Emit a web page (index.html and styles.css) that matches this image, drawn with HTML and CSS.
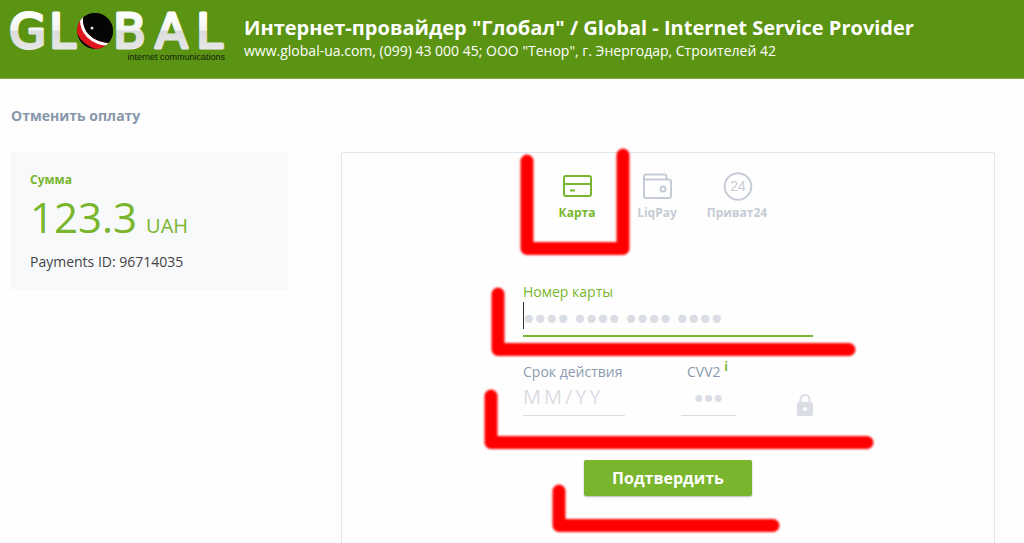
FILE: index.html
```html
<!DOCTYPE html>
<html lang="ru">
<head>
<meta charset="utf-8">
<meta name="viewport" content="width=device-width, initial-scale=1">
<title>Глобал - оплата</title>
<link rel="stylesheet" href="styles.css">
</head>
<body>
<header class="header">
  <svg class="logo" viewBox="0 0 218 60" role="img" aria-label="Global internet communications">
    <defs>
      <linearGradient id="silver" gradientUnits="userSpaceOnUse" x1="0" y1="4" x2="0" y2="41">
        <stop offset="0" stop-color="#fff"/>
        <stop offset="0.48" stop-color="#f4f4f4"/>
        <stop offset="0.52" stop-color="#dcdcdc"/>
        <stop offset="1" stop-color="#e6e6e6"/>
      </linearGradient>
      <clipPath id="ball"><circle cx="85" cy="23" r="18"/></clipPath>
    </defs>
    <g class="logo-word">
      <text x="-1" y="40">G</text>
      <text x="39" y="40">L</text>
      <text x="103" y="40">B</text>
      <text x="145" y="40">A</text>
      <text x="186" y="40">L</text>
    </g>
    <g clip-path="url(#ball)">
      <circle cx="85" cy="23" r="18" fill="#080808"/>
      <path d="M71 4C63 25 80 41 106 38" fill="none" stroke="#e0161c" stroke-width="9"/>
      <path d="M73 4C67 23 82 38 104 36" fill="none" stroke="#fff" stroke-width="3"/>
      <path d="M74 4C69 22 83 36 104 35V0H74Z" fill="#050505"/>
    </g>
    <circle cx="82" cy="20" r="1.500" fill="#ddd"/>
    <text class="logo-tag" x="215" y="52" text-anchor="end">internet communications</text>
  </svg>
  <div class="company">
    <h1 class="company-name">Интернет-провайдер "Глобал" / Global - Internet Service Provider</h1>
    <p class="company-info">www.global-ua.com, (099) 43 000 45; ООО "Тенор", г. Энергодар, Строителей 42</p>
  </div>
</header>

<main class="main">
  <a class="cancel" href="#">Отменить оплату</a>
  <div class="columns">
    <aside class="summary">
      <h2 class="summary-title">Сумма</h2>
      <p class="amount">123.3 <span class="currency">UAH</span></p>
      <p class="payment-id">Payments ID: 96714035</p>
    </aside>

    <section class="card">
      <form class="form">
        <div class="methods">
          <button class="method method-active" type="button">
            <svg class="method-icon" viewBox="0 0 32 30">
              <rect x="3" y="5" width="27" height="20" rx="2"/>
              <path d="M3 13H30M9 19.500H14"/>
            </svg>
            Карта
          </button>
          <button class="method" type="button">
            <svg class="method-icon" viewBox="0 0 32 30">
              <path d="M3 5.500V25a2 2 0 0 0 2 2H28a2 2 0 0 0 2-2V10.500a2 2 0 0 0-2-2H5a2 2 0 0 1-2-3a2 2 0 0 1 2-2H23.500a2 2 0 0 1 2 2V8"/>
              <circle cx="22" cy="18" r="2.500"/>
            </svg>
            LiqPay
          </button>
          <button class="method" type="button">
            <svg class="method-icon" viewBox="0 0 32 30">
              <circle cx="17" cy="15.500" r="13.300"/>
              <text class="badge-number" x="17" y="20" text-anchor="middle">24</text>
            </svg>
            Приват24
          </button>
        </div>

        <div class="field field-active">
          <label class="label" for="number">Номер карты</label>
          <input class="input dots" id="number" type="text" placeholder="●●●● ●●●● ●●●● ●●●●">
        </div>

        <div class="row">
          <div class="field field-expiry">
            <label class="label" for="expiry">Срок действия</label>
            <input class="input expiry" id="expiry" type="text" placeholder="MM/YY">
          </div>
          <div class="field field-cvv">
            <label class="label label-cvv" for="cvv">CVV2 <sup class="hint">i</sup></label>
            <input class="input dots dots-cvv" id="cvv" type="text" placeholder="●●●">
          </div>
          <svg class="lock" viewBox="0 0 16 22">
            <path d="M3.500 9V5.500a4.500 4.500 0 0 1 9 0V9" fill="none" stroke="#dadde4" stroke-width="2"/>
            <rect x="0" y="8" width="16" height="14" rx="2" fill="#dadde4"/>
            <circle cx="8" cy="15" r="2" fill="#fff"/>
          </svg>
        </div>

        <button class="submit" type="submit">Подтвердить</button>
      </form>

      <svg class="marks" viewBox="0 0 654 391" aria-hidden="true">
        <path d="M186 8V95.500H282V2"/>
        <path d="M157 141V196.500H508"/>
        <path d="M150 243V289.500H526"/>
        <path d="M218 338V372.500H432"/>
      </svg>
    </section>
  </div>
</main>
</body>
</html>
```
FILE: styles.css
```css
* {
  box-sizing: border-box;
}

body {
  margin: 0;
  min-height: 100vh;
  display: flex;
  flex-direction: column;
  background: #fefefe;
  color: #444;
  font-family: "Open Sans", "Noto Sans", sans-serif;
  font-size: 14px;
}

h1, h2, p {
  margin: 0;
}

.header {
  display: flex;
  align-items: flex-start;
  gap: 16px;
  padding: 8px 10px 10px;
  background: #5b9412;
  border-bottom: 1px solid #82ae4b;
  color: #fff;
}

.logo {
  flex: none;
  width: 218px;
  height: 60px;
  overflow: visible;
}

.logo-word {
  fill: url(#silver);
  stroke: url(#silver);
  stroke-width: 3;
  stroke-linejoin: round;
  font-family: "DejaVu Sans", sans-serif;
  font-size: 48px;
}

.logo-tag {
  fill: #10200a;
  font-family: "Liberation Sans", sans-serif;
  font-size: 9px;
}

.company {
  padding-top: 7px;
}

.company-name {
  font-size: 20px;
  line-height: 26px;
}

.company-info {
  font-size: 14px;
  line-height: 20px;
}

.main {
  flex: 1;
  display: flex;
  flex-direction: column;
  align-items: flex-start;
  gap: 26px;
  padding: 27px 29px 0 11px;
}

.cancel {
  color: #8797ab;
  font-size: 14px;
  font-weight: 700;
  line-height: 20px;
  text-decoration: none;
}

.columns {
  flex: 1;
  align-self: stretch;
  display: flex;
  align-items: stretch;
  gap: 53px;
}

.summary {
  flex: 0 0 277px;
  align-self: flex-start;
  padding: 20px 19px 18px;
  border-radius: 2px;
  background: #f8f9fb;
}

.summary-title {
  color: #79b62d;
  font-size: 12px;
  line-height: 16px;
}

.amount {
  display: flex;
  align-items: baseline;
  gap: 9px;
  padding-top: 3px;
  color: #79b62d;
  font-size: 42px;
  line-height: 52px;
}

.currency {
  font-size: 20px;
}

.payment-id {
  font-size: 14px;
  line-height: 20px;
}

.card {
  flex: 1;
  position: relative;
  border: 1px solid #e0e6ee;
  border-bottom: 0;
  border-radius: 2px 2px 0 0;
}

.form {
  width: 290px;
  margin: 0 auto;
  padding-top: 18px;
  display: flex;
  flex-direction: column;
}

.methods {
  display: flex;
  padding-left: 14px;
  margin-bottom: 60px;
}

.method {
  width: 80px;
  padding: 0;
  display: flex;
  flex-direction: column;
  align-items: center;
  gap: 3px;
  border: 0;
  background: none;
  color: #c6ccd6;
  font-family: inherit;
  font-size: 12px;
  font-weight: 700;
  line-height: 18px;
}

.method-active {
  color: #79b62d;
}

.method-icon {
  width: 32px;
  height: 30px;
  fill: none;
  stroke: currentColor;
  stroke-width: 2;
}

.badge-number {
  fill: currentColor;
  stroke: none;
  font-family: "Liberation Sans", sans-serif;
  font-size: 14px;
  font-weight: 400;
}

.field {
  display: flex;
  flex-direction: column;
  position: relative;
}

.label {
  color: #8a9bb0;
  font-size: 14px;
  line-height: 20px;
}

.input {
  width: 100%;
  height: 34px;
  padding: 0 0 4px;
  border: 0;
  border-bottom: 1px solid #d8dce3;
  outline: 0;
  background: none;
  color: #444;
  font-family: inherit;
  font-size: 20px;
}

.input::placeholder {
  color: #dadde4;
  opacity: 1;
}

.dots {
  font-family: "Liberation Sans", sans-serif;
  font-size: 19px;
}

.dots-cvv {
  padding-bottom: 2px;
  font-size: 16px;
  text-align: center;
}

.expiry {
  letter-spacing: 3px;
}

.field-active .label {
  color: #79b62d;
}

.field-active .input {
  height: 35px;
  padding-bottom: 2px;
  border-bottom: 2px solid #79b62d;
}

.field-active::after {
  content: "";
  position: absolute;
  left: 0;
  bottom: 8px;
  width: 1px;
  height: 27px;
  background: #333;
}

.row {
  display: flex;
  align-items: flex-end;
  margin: 25px 0 44px;
}

.field-expiry {
  width: 102px;
  margin-right: 56px;
}

.field-cvv {
  width: 55px;
}

.label-cvv {
  padding-left: 6px;
  white-space: nowrap;
}

.hint {
  color: #79b62d;
  font-size: 12px;
  font-weight: 700;
  line-height: 0;
}

.lock {
  width: 16px;
  height: 22px;
  margin-left: auto;
}

.submit {
  align-self: center;
  width: 168px;
  height: 36px;
  border: 0;
  border-radius: 2px;
  background: #79b62d;
  box-shadow: 0 1px 2px #b8b8b8;
  color: #fff;
  font-family: inherit;
  font-size: 16px;
  font-weight: 700;
}

.marks {
  position: absolute;
  top: 0;
  left: 50%;
  width: 654px;
  height: 391px;
  transform: translateX(-50%);
  overflow: visible;
  pointer-events: none;
  fill: none;
  stroke: #f00;
  stroke-width: 13;
  stroke-linecap: round;
  stroke-linejoin: round;
  filter: blur(1px);
}
```
